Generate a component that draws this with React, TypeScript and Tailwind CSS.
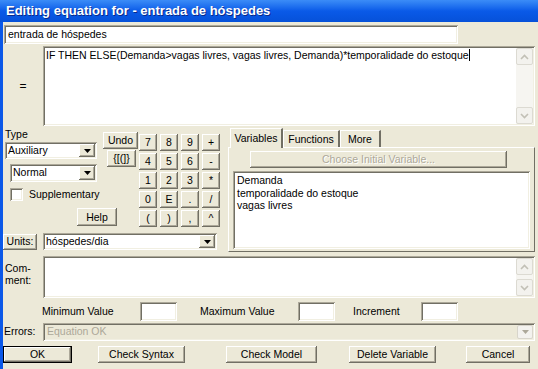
import React from "react";

const raised =
  "bg-[#ece9d8] shadow-[inset_-1px_-1px_0_#716f64,inset_1px_1px_0_#ffffff,inset_-2px_-2px_0_#aca899]";
const sunken =
  "shadow-[inset_1px_1px_0_#aca899,inset_-1px_-1px_0_#ffffff,inset_2px_2px_0_#716f64,inset_-2px_-2px_0_#f1efe2]";

const Btn = ({ label, className = "" }: { label: string; className?: string }) => (
  <div className={`${raised} flex items-center justify-center leading-none ${className}`}>{label}</div>
);

const Chevron = ({ up }: { up?: boolean }) => (
  <svg width="9" height="6" viewBox="0 0 9 6">
    <path
      d={up ? "M1 5 L4.5 1.5 L8 5" : "M1 1 L4.5 4.5 L8 1"}
      fill="none"
      stroke="#c2c0b6"
      strokeWidth="1.6"
    />
  </svg>
);

const ScrollPart = ({ up }: { up?: boolean }) => (
  <div className="w-[17px] h-[17px] rounded-[2px] border border-[#dcdad2] bg-[#f3f2ee] flex items-center justify-center">
    <Chevron up={up} />
  </div>
);

const VScroll = () => (
  <div className="w-[17px] h-full bg-[#f6f5f1] flex flex-col justify-between">
    <ScrollPart up />
    <ScrollPart />
  </div>
);

const Triangle = ({ color = "#000000" }: { color?: string }) => (
  <svg width="7" height="4" viewBox="0 0 7 4">
    <path d="M0 0 H7 L3.5 4 Z" fill={color} />
  </svg>
);

const Select = ({ value, className = "" }: { value: string; className?: string }) => (
  <div className={`${sunken} bg-white p-[2px] flex ${className}`}>
    <div className="flex-1 pl-[1px] flex items-center">{value}</div>
    <div className={`${raised} w-[16px] h-full flex items-center justify-center`}>
      <Triangle />
    </div>
  </div>
);

const keys = ["7", "8", "9", "+", "4", "5", "6", "-", "1", "2", "3", "*", "0", "E", ".", "/", "(", ")", ",", "^"];

export default function App() {
  return (
    <div className="w-[538px] h-[369px] overflow-hidden bg-[#ece9d8] flex flex-col font-['Liberation_Sans',Arial,sans-serif] text-[10.5px] text-black">
      <div className="h-[22px] shrink-0 flex items-center pl-[6px] bg-gradient-to-b from-[#3b8cf7] via-[#0a5ae8] to-[#0651d9] text-white font-bold text-[13px] [text-shadow:1px_1px_#0a2a8a]">
        Editing equation for - entrada de hóspedes
      </div>

      <div className="flex-1 border-l-[3px] border-[#0b58e8] flex flex-col">
        {/* name */}
        <div className={`${sunken} bg-white mt-[3px] ml-[1px] w-[454px] h-[19px] flex items-center pl-[4px]`}>
          entrada de hóspedes
        </div>

        {/* equation */}
        <div className="mt-[2px] flex h-[80px]">
          <div className="w-[40px] flex items-center justify-center text-[12px]">=</div>
          <div className={`${sunken} bg-white w-[492px] p-[2px] flex`}>
            <div className="flex-1 pl-[1px] pt-[1px] leading-[13px] whitespace-nowrap">
              IF THEN ELSE(Demanda&gt;vagas livres, vagas livres, Demanda)*temporalidade do estoque
              <span className="inline-block w-[1px] h-[12px] bg-black align-[-2px]" />
            </div>
            <VScroll />
          </div>
        </div>

        {/* middle */}
        <div className="mt-[2px] flex h-[124px]">
          <div className="w-[225px] flex flex-col">
            <div className="flex">
              <div className="w-[136px] flex flex-col">
                <div className="flex">
                  <div className="w-[100px] pl-[2px] flex flex-col">
                    <div className="h-[13px] leading-[13px]">Type</div>
                    <Select value="Auxiliary" className="mt-[1px] w-[92px] h-[17px]" />
                    <Select value="Normal" className="mt-[5px] ml-[5px] w-[87px] h-[18px]" />
                    <div className="mt-[6px] ml-[5px] flex items-center h-[13px]">
                      <div className={`${sunken} bg-white w-[13px] h-[13px]`} />
                      <span className="ml-[6px]">Supplementary</span>
                    </div>
                  </div>
                  <div className="flex flex-col">
                    <Btn label="Undo" className="mt-[4px] w-[35px] h-[17px]" />
                    <Btn label="{[(]}" className="mt-[1px] ml-[4px] w-[29px] h-[17px]" />
                  </div>
                </div>
                <Btn label="Help" className="mt-[7px] ml-[74px] w-[40px] h-[18px]" />
              </div>
              <div className="mt-[6px] grid grid-cols-[repeat(4,18px)] gap-x-[3px] gap-y-[2px]">
                {keys.map((k) => (
                  <Btn key={k} label={k} className="h-[17px]" />
                ))}
              </div>
            </div>
            <div className="mt-[6px] flex items-center">
              <Btn label="Units:" className="w-[34px] h-[16px]" />
              <Select value="hóspedes/dia" className="ml-[6px] w-[174px] h-[17px]" />
            </div>
          </div>

          {/* tabs */}
          <div className="w-[307px] flex flex-col">
            <div className="h-[20px] flex items-end pl-[2px]">
              <div className="w-[53px] h-[20px] bg-[#ece9d8] border-t border-l border-white border-r-2 border-r-[#716f64] flex items-center justify-center relative z-10">
                Variables
              </div>
              <div className="w-[57px] h-[18px] border-t border-l border-white border-r-2 border-r-[#716f64] flex items-center justify-center">
                Functions
              </div>
              <div className="w-[41px] h-[18px] border-t border-l border-white border-r-2 border-r-[#716f64] flex items-center justify-center">
                More
              </div>
            </div>
            <div className="flex-1 -mt-[1px] border-t border-l border-white border-r border-b border-r-[#716f64] border-b-[#716f64] flex flex-col">
              <div className={`${raised} mt-[3px] ml-[21px] w-[257px] h-[17px] flex items-center justify-center text-[#aca899] [text-shadow:1px_1px_#ffffff]`}>
                Choose Initial Variable...
              </div>
              <div className={`${sunken} bg-white mt-[3px] ml-[4px] w-[297px] h-[78px] px-[4px] pt-[3px] leading-[12.5px]`}>
                <div>Demanda</div>
                <div>temporalidade do estoque</div>
                <div>vagas livres</div>
              </div>
            </div>
          </div>
        </div>

        {/* comment */}
        <div className="mt-[4px] flex h-[42px]">
          <div className="w-[40px] pl-[2px] pt-[6px] leading-[12px]">
            <div>Com-</div>
            <div>ment:</div>
          </div>
          <div className={`${sunken} bg-white w-[492px] p-[2px] flex`}>
            <div className="flex-1" />
            <VScroll />
          </div>
        </div>

        {/* ranges */}
        <div className="mt-[4px] flex items-center h-[19px]">
          <span className="w-[137px] pl-[39px]">Minimum Value</span>
          <div className={`${sunken} bg-white w-[37px] h-[19px]`} />
          <span className="w-[121px] pl-[23px]">Maximum Value</span>
          <div className={`${sunken} bg-white w-[37px] h-[19px]`} />
          <span className="w-[86px] pl-[18px]">Increment</span>
          <div className={`${sunken} bg-white w-[37px] h-[19px]`} />
        </div>

        {/* errors */}
        <div className="mt-[2px] flex items-center h-[18px]">
          <span className="w-[40px] pl-[1px]">Errors:</span>
          <div className={`${sunken} w-[492px] h-[18px] p-[2px] flex`}>
            <div className="flex-1 pl-[2px] flex items-center text-[#aca899]">Equation OK</div>
            <div className="w-[16px] h-full rounded-[2px] border border-[#d8d5cb] bg-[#f3f2ee] flex items-center justify-center">
              <Triangle color="#aca899" />
            </div>
          </div>
        </div>

        {/* buttons */}
        <div className="mt-[5px] flex h-[17px]">
          <div className="w-[69px] h-[17px] border border-black">
            <Btn label="OK" className="w-full h-full" />
          </div>
          <Btn label="Check Syntax" className="ml-[26px] w-[87px]" />
          <Btn label="Check Model" className="ml-[41px] w-[91px]" />
          <Btn label="Delete Variable" className="ml-[32px] w-[87px]" />
          <Btn label="Cancel" className="ml-[30px] w-[64px]" />
        </div>
      </div>
    </div>
  );
}
